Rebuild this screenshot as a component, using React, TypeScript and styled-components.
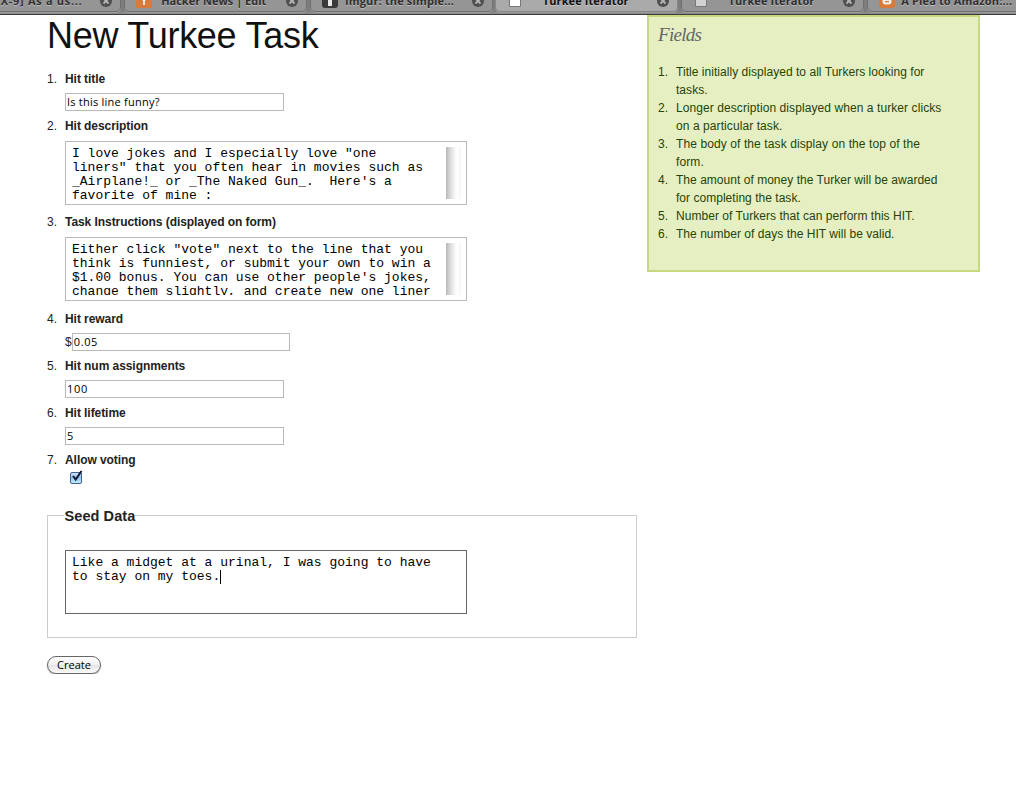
import React from "react";
import styled, { createGlobalStyle } from "styled-components";

const Global = createGlobalStyle`
  * { box-sizing: border-box; }
  body { margin: 0; background: #fff; color: #222; font: 12px/18px "Liberation Sans", Arial, sans-serif; }
`;

const TabBar = styled.nav`
  display: flex;
  gap: 2.75px;
  height: 15px;
  overflow: hidden;
  background: linear-gradient(#7d7d7d 0 11px, #8b8b8b 13px);
  border-bottom: 1px solid #3c3c3c;
`;
const TabBox = styled.div<{ $active?: boolean; $first?: boolean }>`
  flex: none;
  display: flex;
  align-items: center;
  width: 183px;
  height: 22px;
  margin-top: -10px;
  margin-left: ${(p) => (p.$first ? "-62px" : "0")};
  padding: 0 8px 0 11px;
  border: 1px solid ${(p) => (p.$active ? "#868686" : "#707070")};
  border-radius: 5px;
  background: ${(p) => (p.$active ? "#aaa" : "#959595")};
  box-shadow: 0 1px 0 #9b9b9b;
`;
const TabIcon = styled.span`
  flex: none;
  width: 16px;
  height: 16px;
  margin-top: -2px;
  display: flex;
  justify-content: center;
`;
const TabTitle = styled.span<{ $active?: boolean; $ls?: number; $indent?: number }>`
  flex: none;
  width: 124px;
  padding-left: ${(p) => p.$indent ?? 0}px;
  text-align: center;
  white-space: nowrap;
  font: 700 11px/14px "Open Sans", sans-serif;
  letter-spacing: ${(p) => p.$ls ?? 0}px;
  color: ${(p) => (p.$active ? "#111" : "#303030")};
  text-shadow: 0 1px 0 rgba(255, 255, 255, 0.35);
`;
const CloseSvg = styled.svg`
  flex: none;
  margin-left: 10px;
`;

const Page = styled.div`
  display: flex;
  align-items: flex-start;
  gap: 10px;
  padding-left: 47px;
`;
const Main = styled.main`
  width: 590px;
`;
const Title = styled.h1`
  margin: 0;
  height: 55px;
  font-size: 36px;
  font-weight: 400;
  line-height: 41px;
  letter-spacing: -0.27px;
  color: #111;
`;
const Items = styled.ol`
  list-style: none;
  margin: 0;
  padding: 0;
`;
const Item = styled.li<{ $after?: number }>`
  display: grid;
  grid-template-columns: 18px 1fr;
  padding-bottom: ${(p) => p.$after ?? 6}px;
`;
const Label = styled.label`
  font-weight: 700;
  letter-spacing: -0.06px;
`;
const Control = styled.div<{ $top?: number }>`
  grid-column: 2;
  display: flex;
  padding-top: ${(p) => p.$top ?? 5}px;
`;
const Input = styled.input<{ $numeric?: boolean; $width?: number }>`
  width: ${(p) => p.$width ?? 219}px;
  height: 18px;
  padding: 0 1px 2px;
  border: 1px solid #b9b9b9;
  border-radius: 0;
  outline: none;
  background: #fff;
  color: #000;
  font: 11px/14px "Open Sans", sans-serif;
  letter-spacing: ${(p) => (p.$numeric ? 0.65 : 0.23)}px;
`;
const Area = styled.div<{ $focus?: boolean }>`
  display: flex;
  width: 402px;
  height: 64px;
  padding: 5px;
  border: 1px solid ${(p) => (p.$focus ? "#666" : "#b9b9b9")};
  background: #fff;
`;
const AreaText = styled.div`
  width: 375px;
  height: 52px;
  padding-left: 1px;
  overflow: hidden;
  white-space: pre;
  color: #000;
  font: 13px/14px "Liberation Mono", monospace;
`;
const ScrollTrack = styled.div`
  width: 15px;
  height: 52px;
  background: linear-gradient(90deg, #b8b8b8, #dcdcdc 30%, #f7f7f7 60%, #fff 78%, #f4f4f4);
`;
const Caret = styled.span`
  display: inline-block;
  width: 1px;
  height: 14px;
  vertical-align: top;
  background: #000;
`;
const SeedBox = styled.section`
  height: 123px;
  margin-top: 27px;
  padding-left: 17px;
  border: 1px solid #ccc;
`;
const Legend = styled.h2`
  width: max-content;
  margin: -9px 0 25px -1px;
  padding-left: 0.5px;
  background: #fff;
  font-size: 14.5px;
  line-height: 18px;
  letter-spacing: 0.08px;
`;
const Button = styled.button`
  display: block;
  width: 54px;
  height: 18px;
  margin-top: 18px;
  padding: 0 0 1px;
  border: 1px solid #666;
  border-radius: 9px;
  background: linear-gradient(#fff, #f0f0f0 48%, #e4e4e4 52%, #fbfbfb);
  box-shadow: 0 1px 1px rgba(0, 0, 0, 0.35);
  color: #000;
  font: 11px/14px "Open Sans", sans-serif;
`;
const Aside = styled.aside`
  width: 333px;
  height: 257px;
  padding: 7px 9px;
  border: 2px solid #c6d880;
  background: #e6efc2;
  color: #264409;
`;
const AsideTitle = styled.h3`
  margin: 0 0 17px;
  font: italic 19px/22px "Liberation Serif", serif;
  letter-spacing: -0.7px;
  color: #666;
`;
const Note = styled.li<{ $ls?: number }>`
  display: grid;
  grid-template-columns: 18px 1fr;
  white-space: pre;
  letter-spacing: ${(p) => p.$ls ?? 0}px;
`;
const CheckBox = styled.svg`
  display: block;
  margin: 0 0 0 4px;
`;

const Close = () => (
  <CloseSvg width="12" height="12" viewBox="0 0 12 12">
    <circle cx="6" cy="6" r="6" fill="#505050" />
    <path d="M3.5 3.5 8.5 8.5M8.5 3.5 3.5 8.5" stroke="#b5b5b5" strokeWidth="1.8" />
  </CloseSvg>
);

const icons: Record<string, React.ReactNode> = {
  hn: (
    <svg width="16" height="16">
      <path d="M0 0h16v16H0z" fill="#d87a3a" />
      <path d="M4.5 3 8 9l3.500-6M8 9v4" stroke="#eee" strokeWidth="1.8" fill="none" />
    </svg>
  ),
  imgur: (
    <svg width="16" height="16">
      <rect width="16" height="16" rx="3" fill="#3a3a3a" />
      <path d="M6 2h4v12H6z" fill="#e8e8e8" />
    </svg>
  ),
  page: (
    <svg width="12" height="15">
      <path d="M.5.5h11v14H.5z" fill="#fff" stroke="#777" />
    </svg>
  ),
  dim: (
    <svg width="12" height="15">
      <path d="M.5.5h11v14H.5z" fill="#d2d2d2" stroke="#777" />
    </svg>
  ),
  blogger: (
    <svg width="16" height="16">
      <rect width="16" height="16" rx="3" fill="#d87a3a" />
      <rect x="3.500" y="3.500" width="9" height="9" rx="3" fill="#eee" />
      <path d="M6 6.500h3M6 9.700h4" stroke="#d87a3a" strokeWidth="1.300" />
    </svg>
  ),
};

const tabs = [
  { title: "[EX-9] As a us...", icon: "page", ls: 0.7, indent: 16 },
  { title: "Hacker News | Edit", icon: "hn", ls: 0 },
  { title: "Imgur: the simple...", icon: "imgur", ls: 0.15 },
  { title: "Turkee Iterator", icon: "page", ls: 0.1, indent: 1, active: true },
  { title: "Turkee Iterator", icon: "dim", ls: 0.1, indent: 1 },
  { title: "A Plea to Amazon:...", icon: "blogger", ls: 0.15 },
];

const description = `I love jokes and I especially love "one
liners" that you often hear in movies such as
_Airplane!_ or _The Naked Gun_.  Here's a
favorite of mine :`;
const instructions = `Either click "vote" next to the line that you
think is funniest, or submit your own to win a
$1.00 bonus. You can use other people's jokes,
change them slightly, and create new one liner`;

const notes = [
  { text: "Title initially displayed to all Turkers looking for\ntasks.", ls: 0.04 },
  { text: "Longer description displayed when a turker clicks\non a particular task.", ls: 0.08 },
  { text: "The body of the task display on the top of the\nform.", ls: 0.1 },
  { text: "The amount of money the Turker will be awarded\nfor completing the task.", ls: 0.03 },
  { text: "Number of Turkers that can perform this HIT.", ls: 0.04 },
  { text: "The number of days the HIT will be valid.", ls: 0.03 },
];

export default function App() {
  return (
    <>
      <Global />
      <TabBar>
        {tabs.map((t, i) => (
          <TabBox key={i} $active={t.active} $first={i === 0}>
            <TabIcon>{icons[t.icon]}</TabIcon>
            <TabTitle $active={t.active} $ls={t.ls} $indent={t.indent}>{t.title}</TabTitle>
            <Close />
          </TabBox>
        ))}
      </TabBar>
      <Page>
        <Main>
          <Title>New Turkee Task</Title>
          <Items>
            <Item>
              <span>1.</span><Label>Hit title</Label>
              <Control><Input defaultValue="Is this line funny?" /></Control>
            </Item>
            <Item $after={8}>
              <span>2.</span><Label>Hit description</Label>
              <Control $top={6}>
                <Area><AreaText>{description}</AreaText><ScrollTrack /></Area>
              </Control>
            </Item>
            <Item $after={9}>
              <span>3.</span><Label>Task Instructions (displayed on form)</Label>
              <Control $top={6}>
                <Area><AreaText>{instructions}</AreaText><ScrollTrack /></Area>
              </Control>
            </Item>
            <Item>
              <span>4.</span><Label>Hit reward</Label>
              <Control><span>$</span><Input $numeric $width={218} defaultValue="0.05" /></Control>
            </Item>
            <Item>
              <span>5.</span><Label>Hit num assignments</Label>
              <Control><Input $numeric defaultValue="100" /></Control>
            </Item>
            <Item>
              <span>6.</span><Label>Hit lifetime</Label>
              <Control><Input $numeric defaultValue="5" /></Control>
            </Item>
            <Item $after={3}>
              <span>7.</span><Label>Allow voting</Label>
              <Control $top={0}>
                <CheckBox width="16" height="16" viewBox="0 0 16 16">
                  <defs>
                    <linearGradient id="aqua" x1="0" y1="0" x2="0" y2="1">
                      <stop offset="0" stopColor="#d3e6f8" />
                      <stop offset=".45" stopColor="#8fc3f0" />
                      <stop offset="1" stopColor="#c4f0ff" />
                    </linearGradient>
                  </defs>
                  <rect x="1.500" y="3.500" width="11" height="11" rx="1.5" fill="url(#aqua)" stroke="#44618f" />
                  <path d="M4 7 6.700 10.500 12.500 2" fill="none" stroke="#0d1830" strokeWidth="2" />
                </CheckBox>
              </Control>
            </Item>
          </Items>
          <SeedBox>
            <Legend>Seed Data</Legend>
            <Area $focus>
              <AreaText>{"Like a midget at a urinal, I was going to have\nto stay on my toes."}<Caret /></AreaText>
            </Area>
          </SeedBox>
          <Button>Create</Button>
        </Main>
        <Aside>
          <AsideTitle>Fields</AsideTitle>
          <Items>
            {notes.map((n, i) => (
              <Note key={i} $ls={n.ls}><span>{i + 1}.</span><span>{n.text}</span></Note>
            ))}
          </Items>
        </Aside>
      </Page>
    </>
  );
}
